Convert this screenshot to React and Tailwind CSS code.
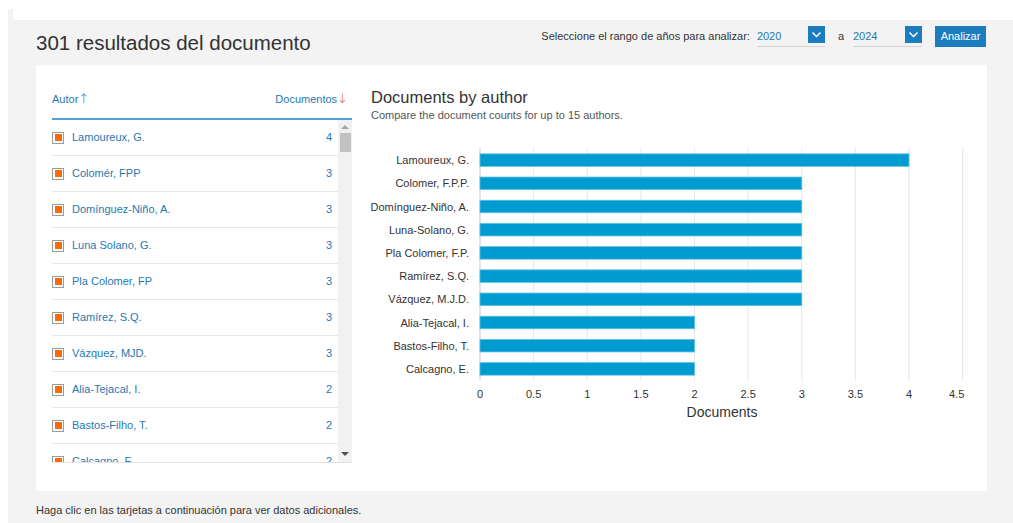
import React from "react";

const authors = [
  ["Lamoureux, G.", 4],
  ["Colomér, FPP", 3],
  ["Domínguez-Niño, A.", 3],
  ["Luna Solano, G.", 3],
  ["Pla Colomer, FP", 3],
  ["Ramírez, S.Q.", 3],
  ["Vázquez, MJD.", 3],
  ["Alia-Tejacal, I.", 2],
  ["Bastos-Filho, T.", 2],
  ["Calcagno, E.", 2],
];

const chartData = [
  ["Lamoureux, G.", 4],
  ["Colomer, F.P.P.", 3],
  ["Domínguez-Niño, A.", 3],
  ["Luna-Solano, G.", 3],
  ["Pla Colomer, F.P.", 3],
  ["Ramírez, S.Q.", 3],
  ["Vázquez, M.J.D.", 3],
  ["Alia-Tejacal, I.", 2],
  ["Bastos-Filho, T.", 2],
  ["Calcagno, E.", 2],
];

function Chevron() {
  return (
    <svg width="17" height="17" viewBox="0 0 17 17" className="block">
      <rect width="17" height="17" fill="#1b7cbf" />
      <path d="M4.5 6.5 L8.5 10.5 L12.5 6.5" fill="none" stroke="#fff" strokeWidth="1.5" />
    </svg>
  );
}

function YearSelect({ value, width }) {
  return (
    <div className={`flex justify-between h-[21px] border-b border-[#d4d4d4] ${width}`}>
      <span className="leading-[21px] text-[#2779b0]">{value}</span>
      <Chevron />
    </div>
  );
}

function Checkbox() {
  return (
    <div className="w-[12px] h-[12px] border border-[#9c9c9c] bg-white flex items-center justify-center shrink-0">
      <div className="w-[7px] h-[7px] bg-[#ff6a00]" />
    </div>
  );
}

function AuthorTable() {
  return (
    <div className="w-[300px] shrink-0">
      <div className="h-[55px] border-b-2 border-[#4aa3d3] flex items-end justify-between pb-[12px] pr-[4px] text-[11px] leading-[14px] text-[#2779b0]">
        <span>
          Autor<span className="text-[13px] font-['DejaVu_Sans',sans-serif] font-extralight">↑</span>
        </span>
        <span>
          Documentos
          <span className="text-[13px] text-[#e8603c] font-['DejaVu_Sans',sans-serif] font-extralight">↓</span>
        </span>
      </div>
      <div className="h-[343px] flex overflow-hidden border-b border-[#e3e3e3]">
        <div className="w-[286px]">
          {authors.map(([name, n]) => (
            <div
              key={name}
              className="h-[36px] border-b border-[#e8e8e8] flex items-center pr-[6px] text-[11px] text-[#2779b0]"
            >
              <Checkbox />
              <span className="ml-[8px] flex-1">{name}</span>
              <span>{n}</span>
            </div>
          ))}
        </div>
        <div className="w-[14px] bg-[#f1f1f1] flex flex-col items-center">
          <div className="mt-[5px] border-l-[4px] border-r-[4px] border-b-[4px] border-l-transparent border-r-transparent border-b-[#a3a3a3]" />
          <div className="mt-[4px] w-[11px] h-[19px] bg-[#c1c1c1]" />
          <div className="flex-1" />
          <div className="mb-[6px] border-l-[4px] border-r-[4px] border-t-[4px] border-l-transparent border-r-transparent border-t-[#505050]" />
        </div>
      </div>
    </div>
  );
}

function BarChart() {
  const x0 = 109;
  const unit = 107.25;
  const top = 17.5;
  const band = 23.2;
  const barH = 12.5;
  const ticks = [0, 0.5, 1, 1.5, 2, 2.5, 3, 3.5, 4, 4.5];
  const bottom = top + band * chartData.length;
  return (
    <svg width="610" height="300" className="block">
      {ticks.map((t) => (
        <line
          key={"g" + t}
          x1={x0 + t * unit}
          x2={x0 + t * unit}
          y1={top}
          y2={bottom}
          stroke={t === 0 ? "#c8c8c8" : "#e6e6e6"}
          strokeWidth="1"
        />
      ))}
      {chartData.map(([name, v], i) => {
        const y = top + i * band + (band - barH) / 2;
        return (
          <g key={name}>
            <rect x={x0} y={y} width={v * unit} height={barH} fill="#009bd0" stroke="#5cbde2" strokeWidth="0.8" />
            <text x="98" y={top + i * band + band / 2 + 4} textAnchor="end" fontSize="11" fill="#333">
              {name}
            </text>
          </g>
        );
      })}
      {ticks.map((t) => (
        <text
          key={"t" + t}
          x={x0 + t * unit - (t === 4.5 ? 6 : 0)}
          y="266.5"
          textAnchor="middle"
          fontSize="11"
          fill="#333"
        >
          {String(t)}
        </text>
      ))}
      <text x="351" y="286" textAnchor="middle" fontSize="14" fill="#333">
        Documents
      </text>
    </svg>
  );
}

export default function App() {
  return (
    <div className="w-[1013px] h-[523px] bg-white overflow-hidden font-['Liberation_Sans',Arial,sans-serif] text-[#333]">
      <div className="mt-[9px] ml-[8px] h-[514px] bg-[#f3f3f3]">
        <div className="ml-[5px] h-[11px] bg-white" />
        <div className="h-[45px] flex justify-between pl-[28px] pr-[27px]">
          <h1 className="self-center text-[20.5px] leading-[24px] text-[#323232]">301 resultados del documento</h1>
          <div className="mt-[6px] flex items-start text-[11px]">
            <span className="leading-[21px] mr-[7px]">Seleccione el rango de años para analizar:</span>
            <YearSelect value="2020" width="w-[68px]" />
            <span className="leading-[21px] ml-[13px] mr-[9px]">a</span>
            <YearSelect value="2024" width="w-[69px]" />
            <button className="ml-[13px] h-[21px] w-[51px] bg-[#1b7cbf] text-white text-[11px] leading-[21px]">
              Analizar
            </button>
          </div>
        </div>
        <div className="ml-[28px] w-[951px] h-[426px] bg-white flex pl-[16px]">
          <AuthorTable />
          <div className="ml-[19px] pt-[23px]">
            <div className="text-[16.5px] leading-[19px] text-[#333]">Documents by author</div>
            <div className="mt-[2px] text-[11px] leading-[13px] text-[#555]">
              Compare the document counts for up to 15 authors.
            </div>
            <div className="mt-[9px]">
              <BarChart />
            </div>
          </div>
        </div>
        <div className="ml-[28px] mt-[12px] text-[11px] leading-[14px] text-[#333]">
          Haga clic en las tarjetas a continuación para ver datos adicionales.
        </div>
      </div>
    </div>
  );
}
